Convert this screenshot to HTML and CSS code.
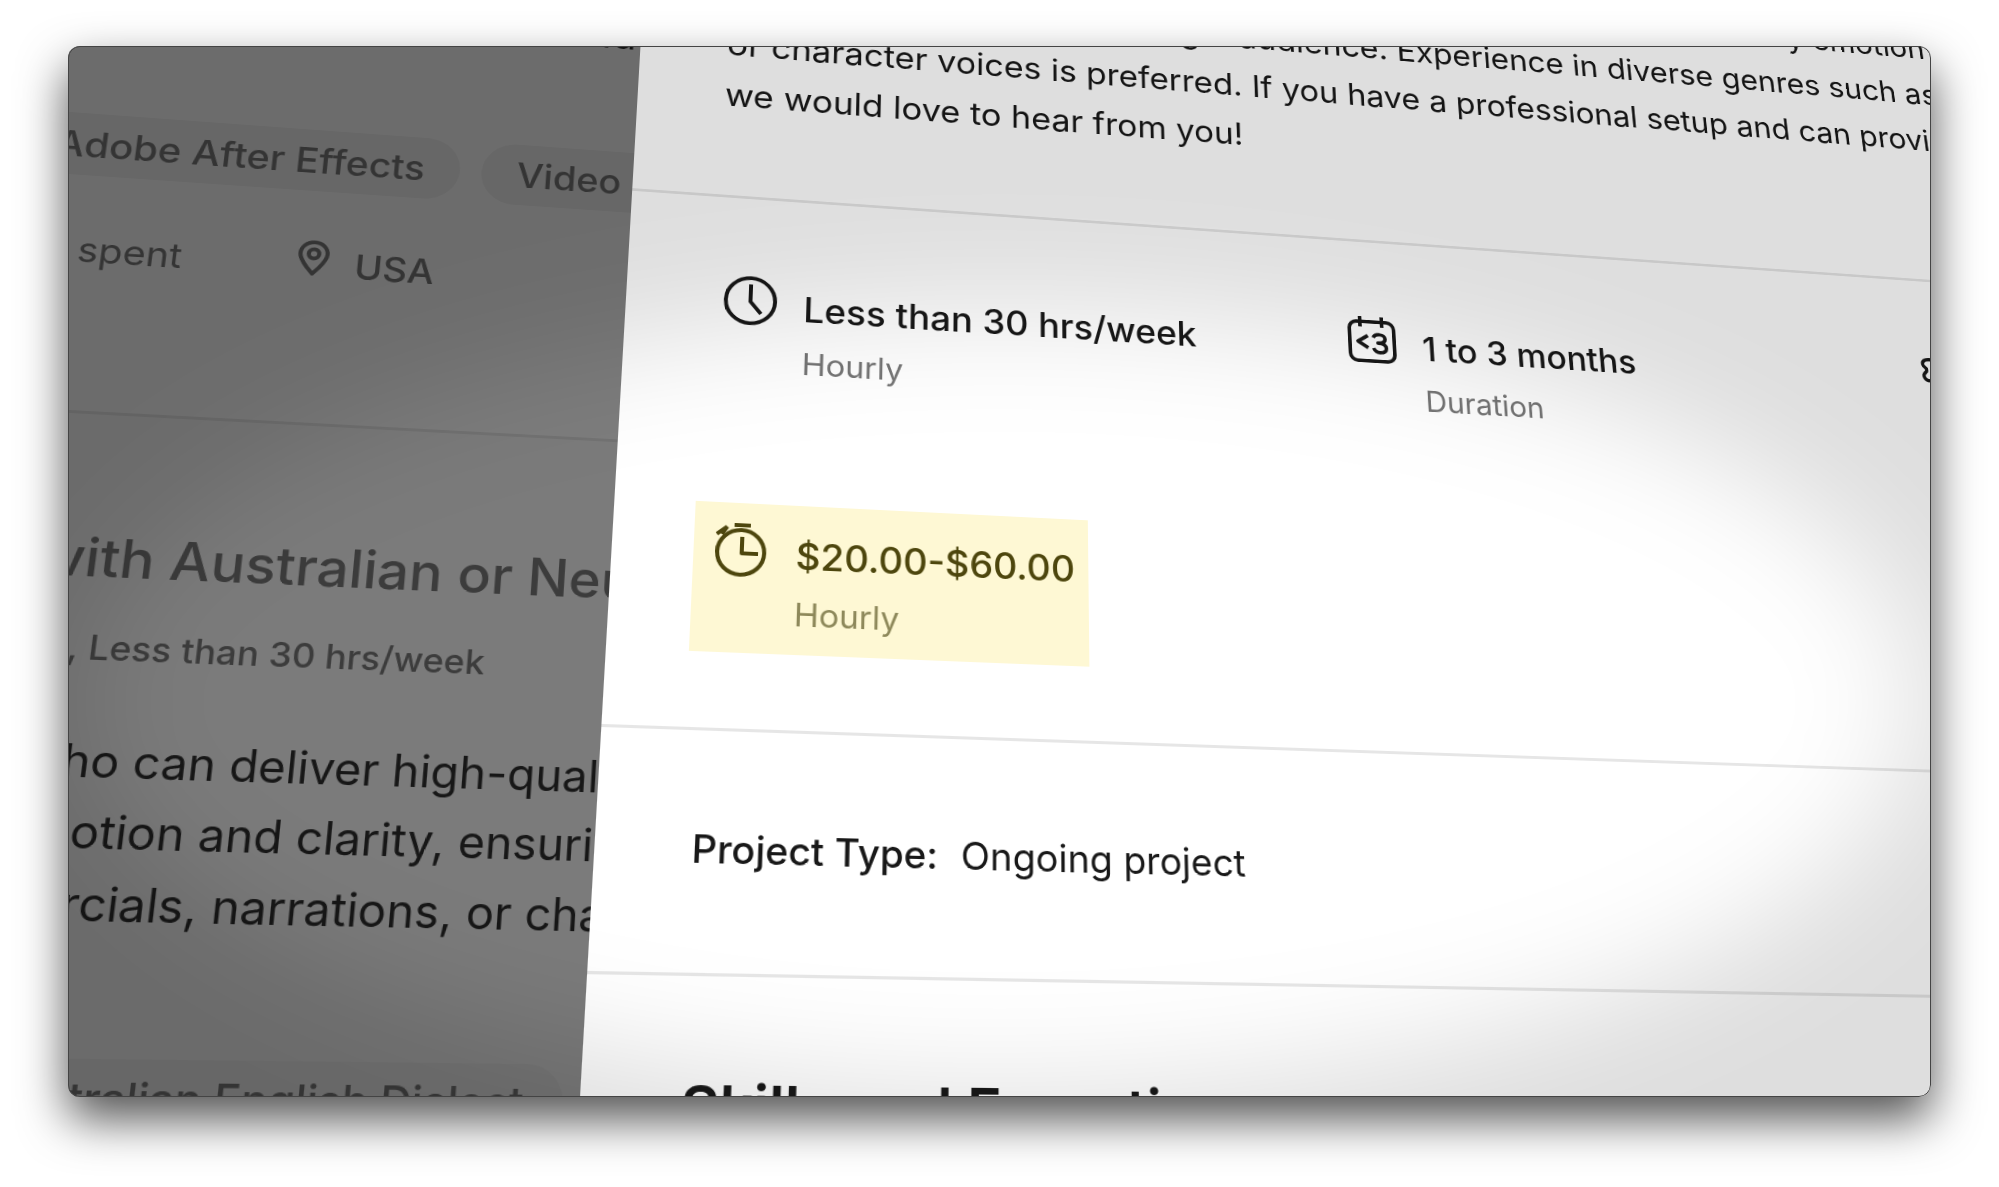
FILE: index.html
```html
<!DOCTYPE html>
<html lang="en">
<head>
    <meta charset="UTF-8">
    <meta name="viewport" content="width=device-width, initial-scale=1.0">
    <title>Job Details</title>
    <link rel="stylesheet" href="styles.css">
</head>
<body>
    <main class="frame">
        <div class="plane">
            <div class="feed">
                <article class="job">
                    <p class="job-text">with smooth transition and clean cuts</p>
                    <ul class="tags">
                        <li>Adobe After Effects</li>
                        <li>Video Editing</li>
                    </ul>
                    <div class="job-info">
                        <span>spent</span>
                        <svg class="pin" viewBox="0 0 30 38">
                            <path d="M15 2C7.500 2 2 7.500 2 14.500C2 20 6 25 9.500 29.500L15 36L20.500 29.500C24 25 28 20 28 14.500C28 7.500 22.500 2 15 2Z"/>
                            <circle cx="15" cy="14.500" r="5"/>
                        </svg>
                        <strong>USA</strong>
                    </div>
                </article>
                <article class="job">
                    <h2>with Australian or Neutral Accent</h2>
                    <p class="job-meta">ek, Less than 30 hrs/week</p>
                    <p class="job-text">&nbsp;who can deliver high-quality<br>emotion and clarity, ensuring<br>mercials, narrations, or character</p>
                    <ul class="tags">
                        <li>Australian English Dialect</li>
                    </ul>
                </article>
            </div>

            <section class="panel">
                <div class="block description">
                    <p>deliver high-quality recordings for our projects. You will clearly convey emotion<br>and clarity, to reach your target audience. Experience in diverse genres such as<br>or character voices is preferred. If you have a professional setup and can provide<br>we would love to hear from you!</p>
                </div>

                <ul class="block features">
                    <li class="feature">
                        <svg class="icon" viewBox="0 0 64 64">
                            <circle cx="32" cy="32" r="25"/>
                            <path d="M32 14V33L43 46"/>
                        </svg>
                        <div>
                            <strong>Less than 30 hrs/week</strong>
                            <small>Hourly</small>
                        </div>
                    </li>
                    <li class="feature">
                        <svg class="icon" viewBox="0 0 64 64">
                            <rect x="6" y="11" width="49" height="45" rx="8"/>
                            <path d="M18 5V17M42 5V17"/>
                            <path d="M26 27L15 34L26 41"/>
                            <path d="M32 29C34 24 45 24 45 30C45 34 41 35 37 35C42 35 46 36 46 41C46 47 34 48 32 41"/>
                        </svg>
                        <div>
                            <strong>1 to 3 months</strong>
                            <small>Duration</small>
                        </div>
                    </li>
                    <li class="feature">
                        <svg class="icon" viewBox="0 0 64 64">
                            <path d="M16 13C6 12 4 19 8 22C11 24 11 27 8 29C4 32 6 40 16 38C20 38 22 41 22 45C23 54 39 54 40 45C40 41 43 38 47 38C57 40 59 32 55 29C52 27 52 24 55 22C59 19 57 12 47 13C43 13 40 11 40 8C39 0 23 0 22 8C22 11 20 13 16 13Z"/>
                            <circle cx="31" cy="26" r="7"/>
                        </svg>
                        <div>
                            <strong>Intermediate</strong>
                            <small>Experience Level</small>
                        </div>
                    </li>
                    <li class="feature highlight">
                        <svg class="icon" viewBox="0 0 64 64">
                            <circle cx="32" cy="37" r="23"/>
                            <path d="M33 21V38H49M25 9H41M8 19L18 11M18 11L13 19"/>
                        </svg>
                        <div>
                            <strong>$20.00-$60.00</strong>
                            <small>Hourly</small>
                        </div>
                    </li>
                </ul>

                <div class="block project">
                    <strong>Project Type:</strong>
                    <span>Ongoing project</span>
                </div>

                <div class="block skills">
                    <h3>Skills and Expertise</h3>
                </div>
            </section>
        </div>
        <div class="vignette"></div>
    </main>
</body>
</html>
```
FILE: styles.css
```css
* {
    box-sizing: border-box;
    margin: 0;
    padding: 0;
}
body {
    display: flex;
    height: 100vh;
    padding: 46px 68px 90px;
    background-color: #fff;
    color: #181818;
    font-family: Inter, "Liberation Sans", sans-serif;
    overflow: hidden;
}
ul {
    list-style: none;
}
svg {
    flex: none;
    fill: none;
    stroke: currentColor;
    stroke-linecap: butt;
    stroke-linejoin: round;
}

/* window */
.frame {
    flex: 1;
    position: relative;
    display: grid;
    place-content: center;
    overflow: hidden;
    border-radius: 12px;
    background-color: #6e6e6e;
    perspective: 2110px;
    box-shadow: 0 22px 48px rgba(0, 0, 0, 0.68);
}
.frame::after {
    content: "";
    position: absolute;
    inset: 0;
    border: 1px solid #444;
    border-radius: 12px;
}
.plane {
    display: flex;
    width: 2600px;
    height: 1440px;
    transform: rotateX(16.8deg) rotateY(8.7deg) rotateZ(0.1deg);
}
.vignette {
    position: absolute;
    inset: -200px;
    background: radial-gradient(41% 27% at 50% 59%, transparent 99%, rgba(0, 0, 0, 0.13) 100%);
    filter: blur(60px);
}

/* job feed behind the panel */
.feed {
    flex: none;
    position: relative;
    width: 917px;
    overflow: hidden;
    white-space: nowrap;
    background-color: #fff;
    color: #303030;
}
.feed::after {
    content: "";
    position: absolute;
    inset: 0;
    background-color: rgba(0, 0, 0, 0.51);
}
.job {
    padding: 118px 0 137px 388px;
    border-bottom: 3px solid #e9e9e9;
}
.job + .job {
    padding: 107px 0 136px 390px;
    background-color: #fbfbfb;
}
.job-text {
    font-size: 42px;
    line-height: 65px;
}
.job h2 {
    font-size: 52px;
    font-weight: 500;
    line-height: 72px;
    color: #7a7a7a;
}
.job-meta {
    margin: 20px 0 44px;
    font-size: 33px;
    font-weight: 500;
    line-height: 60px;
    color: #7a7a7a;
}
.tags {
    display: flex;
    gap: 21px;
    margin: 103px 0 50px -18px;
}
.job:first-child .tags {
    margin-left: -69px;
}
.tags li {
    padding: 0 35px;
    border-radius: 34px;
    background-color: #f2f2f2;
    color: #7a7a7a;
    font-size: 38px;
    font-weight: 500;
    line-height: 68px;
}
.job-info {
    display: flex;
    font-size: 37px;
    line-height: 60px;
    color: #7a7a7a;
}
.job-info strong {
    font-weight: 500;
}
.pin {
    width: 30px;
    height: 38px;
    margin: 4px 25px 0 109px;
    stroke-width: 4;
}

/* job details panel */
.panel {
    flex: 1;
    background-color: #fff;
}
.block {
    padding-left: 90px;
    border-bottom: 3px solid #e6e6e6;
}
.description {
    padding-bottom: 86px;
    font-size: 37px;
    line-height: 60px;
    white-space: nowrap;
}
.features {
    display: grid;
    grid-template-columns: repeat(3, 660px);
    row-gap: 144px;
    padding: 90px 0 86px 93px;
}
.feature {
    display: flex;
    justify-self: start;
    gap: 22px;
}
.icon {
    width: 64px;
    height: 64px;
    margin-top: -8px;
    stroke-width: 4;
}
.feature strong,
.feature small {
    display: block;
    line-height: 60px;
}
.feature strong {
    font-size: 38px;
    font-weight: 500;
}
.feature small {
    font-size: 33px;
    color: #757575;
}
.highlight {
    margin: -22px -14px -11px;
    padding: 22px 14px 11px;
    background-color: #fef8d4;
    color: #4d460d;
}
.highlight small {
    color: #8d885a;
}
.project {
    display: flex;
    gap: 22px;
    padding-top: 84px;
    padding-bottom: 85px;
    font-size: 37px;
    line-height: 60px;
}
.project strong {
    font-weight: 500;
}
.skills {
    padding-top: 82px;
}
.skills h3 {
    font-size: 54px;
    font-weight: 600;
    line-height: 72px;
}
```
